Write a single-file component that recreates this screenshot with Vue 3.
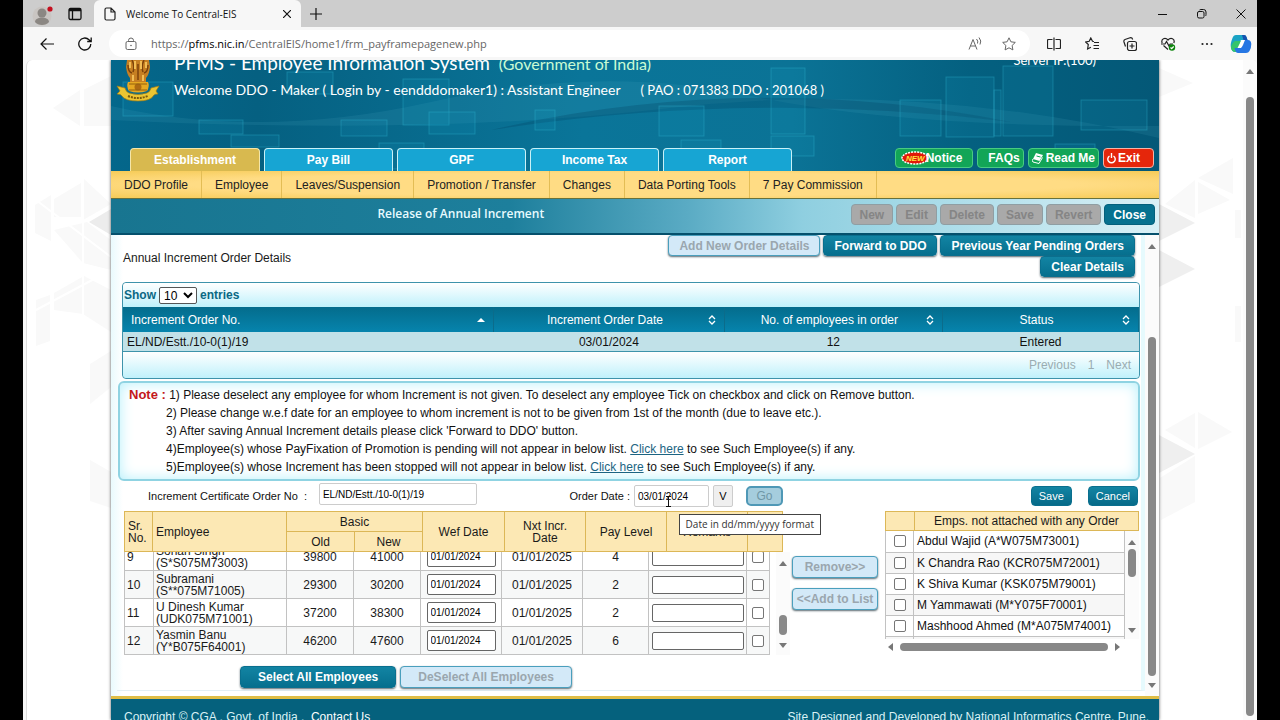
<script setup>
import { ref } from 'vue'

const tabs = ['Establishment', 'Pay Bill', 'GPF', 'Income Tax', 'Report']
const menu = ['DDO Profile', 'Employee', 'Leaves/Suspension', 'Promotion / Transfer', 'Changes', 'Data Porting Tools', '7 Pay Commission']
const actions = ['New', 'Edit', 'Delete', 'Save', 'Revert']
const employees = [
  { no: 9, name: 'Sohan Singh', code: '(S*S075M73003)', old: 39800, next: 41000, level: 4 },
  { no: 10, name: 'Subramani', code: '(S**075M71005)', old: 29300, next: 30200, level: 2 },
  { no: 11, name: 'U Dinesh Kumar', code: '(UDK075M71001)', old: 37200, next: 38300, level: 2 },
  { no: 12, name: 'Yasmin Banu', code: '(Y*B075F64001)', old: 46200, next: 47600, level: 6 }
]
const unattached = [
  'Abdul Wajid (A*W075M73001)',
  'K Chandra Rao (KCR075M72001)',
  'K Shiva Kumar (KSK075M79001)',
  'M Yammawati (M*Y075F70001)',
  'Mashhood Ahmed (M*A075M74001)',
  ''
]
const certificate = ref('EL/ND/Estt./10-0(1)/19')
const orderDate = ref('03/01/2024')
const squares = [
  [12, 22, 50, 34], [88, 60, 44, 14], [120, 75, 48, 12], [176, 12, 46, 22], [230, 60, 46, 16],
  [268, 83, 45, 26], [292, 19, 46, 46], [318, 52, 46, 22], [175, 90, 40, 12], [424, 50, 20, 20],
  [548, 46, 45, 30], [570, 80, 40, 12], [660, 8, 34, 66], [660, 76, 43, 20], [789, 40, 41, 36],
  [835, 17, 48, 60], [883, 30, 7, 46], [892, 6, 50, 70], [970, 40, 66, 30], [944, 84, 40, 12]
]
</script>

<template>
  <div class="screen">
    <div class="browser">
      <header class="titlebar">
        <button class="plain avatar" aria-label="Profile">
          <svg width="26" height="24" viewBox="0 0 26 24"><circle cx="13" cy="14" r="9.500" fill="#c9c5c2"/><circle cx="13" cy="11" r="4.500" fill="#8b8783"/><path d="M6 20c0-6 14-6 14 0-3 4-11 4-14 0z" fill="#8b8783"/><circle cx="21" cy="7" r="2.600" fill="#c50f1f"/></svg>
        </button>
        <button class="plain workspaces" aria-label="Tab actions">
          <svg width="14" height="14" viewBox="0 0 14 14" fill="none" stroke="#111" stroke-width="1.300"><rect x="1" y="1.500" width="12" height="11" rx="1.500"/><path d="M1 3h12" stroke-width="2.500"/><path d="M4.500 3v9"/></svg>
        </button>
        <div class="tab">
          <svg width="12" height="14" viewBox="0 0 12 14" fill="none" stroke="#222" stroke-width="1.200"><path d="M2.500 1H7l4 4v6.500a1.500 1.500 0 0 1-1.500 1.500h-7A1.500 1.500 0 0 1 1 11.500v-9A1.500 1.500 0 0 1 2.500 1zM7 1v4h4"/></svg>
          <span class="tab-title">Welcome To Central-EIS</span>
          <button class="plain" aria-label="Close tab"><svg width="8" height="8" viewBox="0 0 8 8" stroke="#111" stroke-width="1.200"><path d="M0 0l8 8M8 0l-8 8"/></svg></button>
        </div>
        <button class="plain newtab" aria-label="New tab"><svg width="12" height="12" viewBox="0 0 12 12" stroke="#111" stroke-width="1.200"><path d="M6 0v12M0 6h12"/></svg></button>
        <div class="window-controls">
          <button class="plain" aria-label="Minimize"><svg width="10" height="10" viewBox="0 0 10 10" stroke="#111"><path d="M0 5.500h9"/></svg></button>
          <button class="plain" aria-label="Restore"><svg width="10" height="10" viewBox="0 0 10 10" fill="none" stroke="#111"><rect x=".5" y="2.500" width="6.500" height="6.500" rx="1.500"/><path d="M2.500 1Q3 .5 4 .5h2.500Q9 .5 9 3v2.500Q9 6.500 8.500 7"/></svg></button>
          <button class="plain" aria-label="Close"><svg width="10" height="10" viewBox="0 0 10 10" stroke="#111"><path d="M.5.5l9 9M9.500.5l-9 9"/></svg></button>
        </div>
      </header>

      <div class="toolbar">
        <button class="plain" aria-label="Back"><svg width="14" height="12" viewBox="0 0 14 12" fill="none" stroke="#111" stroke-width="1.200"><path d="M14 6H1M6.500.5L1 6l5.500 5.500"/></svg></button>
        <button class="plain" aria-label="Refresh"><svg width="14" height="14" viewBox="0 0 14 14" fill="none" stroke="#111" stroke-width="1.300"><path d="M12.800 7A6 6 0 1 1 11 2.700L13 4.500M13.200.5v4H9.200"/></svg></button>
        <div class="address">
          <svg width="12" height="14" viewBox="0 0 12 14" fill="none" stroke="#666"><rect x="1" y="4.500" width="10" height="8" rx="1.500"/><path d="M3.500 4.500V3.500a2.500 2.500 0 0 1 5 0v1"/><circle cx="6" cy="8.500" r=".8" fill="#666" stroke="none"/></svg>
          <span class="url">https://<b>pfms.nic.in</b>/CentralEIS/home1/frm_payframepagenew.php</span>
          <svg class="read" width="14" height="14" viewBox="0 0 14 14" fill="none" stroke="#666"><path d="M1 12.500L5 2.500l4 10M2.500 9h5M8.500 2q2 2 1 4.500M11 .5q3 3.500 1 7"/></svg>
          <svg width="14" height="14" viewBox="0 0 14 14" fill="none" stroke="#666" stroke-linejoin="round"><path d="M7 .8l1.900 4 4.400.6-3.200 3.100.8 4.400L7 10.800l-3.900 2.100.8-4.400L.7 5.400l4.400-.6z"/></svg>
        </div>
        <div class="tools">
          <svg width="14" height="14" viewBox="0 0 14 14" fill="none" stroke="#222" stroke-width="1.200"><path d="M5.500 2.500h-4q-1 0-1 1v7q0 1 1 1h4M8.500 2.500h4q1 0 1 1v7q0 1-1 1h-4M7 .5v13"/></svg>
          <svg width="14" height="14" viewBox="0 0 14 14" fill="none" stroke="#222" stroke-width="1.200"><path d="M9 4.500L7.500 4.300 5.800 1 4.200 4.300.7 5l2.600 2.500-.7 4.500 3.300-1.800M9 5.500h5M8.500 8.500h5.500M8.500 11.500h5.500"/></svg>
          <svg width="14" height="14" viewBox="0 0 14 14" fill="none" stroke="#222" stroke-width="1.200"><rect x="4.500" y="4.500" width="9" height="9" rx="2"/><path d="M9 6.500v5M6.500 9h5M2.500 9.500L1 5q-.5-2 1-2.500L7 .8q2-.5 2.700 1.700"/></svg>
          <svg width="15" height="14" viewBox="0 0 15 14" fill="none" stroke="#222" stroke-width="1.200"><path d="M1.200 6Q0 3 2.500 1.700 5 .7 7 3 9 .7 11.500 1.700 14 3 12.800 6M0 7h4l1.500-2.500L8 9l1.200-2H12M2.500 8.500L7 12.500"/><circle cx="11" cy="10.500" r="3.200" fill="#0b840b" stroke="none"/><path d="M9.500 10.500l1.200 1.200 2-2.200" stroke="#fff"/></svg>
          <svg width="14" height="14" viewBox="0 0 14 14" fill="#222"><circle cx="2.500" cy="7" r="1.100"/><circle cx="7" cy="7" r="1.100"/><circle cx="11.500" cy="7" r="1.100"/></svg>
        </div>
        <svg class="copilot" width="22" height="20" viewBox="0 0 22 20"><path d="M6 1h8q2 0 2.500 2l1 3H12q-2 0-3 3l-2 7q-.5 2-2 2-3 0-4-4-1-4 1.500-10Q3.500 1 6 1z" fill="#1aa3c4"/><path d="M5 7h6l-3 9q-.5 2-2.500 2Q2 18 1 14q0-4 4-7z" fill="#35c46b"/><path d="M16 19H8q-2 0-2.500-2l-1-3H10q2 0 3-3l2-5h3q3 0 3.300 4 0 4-1.800 7-1 2-3.500 2z" fill="#2576e3"/><path d="M14 1q2 0 2.500 2l1 3h-4L12 1z" fill="#1552b0"/><path d="M11.500 6h3l-3.500 8H7.500z" fill="#fff"/></svg>
      </div>

      <div class="viewport">
        <svg class="backdrop" width="84" height="600" viewBox="27 60 84 600">
          <g fill="#f9f9f9"><path d="M53 108l27-18v36zM83 90l28-14v50H83zM35 205l16-10v46l-16-8zM54 199l27-16v34H54zM83 178l28 26-28 16zM54 230l33-8 24 18v30l-28-7zM54 293l30-17 27 14v42l-28-18-29-4zM36 300l14-5v46l-14 5zM90 364l21-13v36l-21 17zM90 460l21 12v36l-21-7z"/></g>
          <path d="M89 222l22-13v26z" fill="#ececec"/>
          <g stroke="#fff" stroke-width="2"><path d="M83 76v280M53 183v160M36 200l75 57M36 310l75-40"/></g>
        </svg>
        <div class="page">
          <header class="banner">
            <svg class="art" viewBox="0 0 1048 111" preserveAspectRatio="none" aria-hidden="true">
              <path d="M0 46Q150 80 320 42T640 36t408 30v12Q800 20 560 48T0 60z" fill="#56b4c8" opacity=".13"/>
              <path d="M380 70Q640 10 900 62 640 30 380 70z" fill="#003d5c" opacity=".25"/>
              <rect v-for="(s, i) in squares" :key="i" :x="s[0]" :y="s[1]" :width="s[2]" :height="s[3]" fill="#19a6c8" fill-opacity=".13" stroke="#38c3dc" stroke-opacity=".3"/>
            </svg>
            <svg class="emblem" width="44" height="42" viewBox="0 0 44 42">
              <path d="M11 0h22l1 7q-1 8-4 11v4H14v-4q-3-3-4-11z" fill="#c67f22"/>
              <path d="M16 0q3 6 1 12M28 0q-3 6-1 12M22 4v16M12 5q0 7 4 8M32 5q0 7-4 8" fill="none" stroke="#7c420b" stroke-width="1.500"/>
              <path d="M19 1v8M25 1v8M14 2v6M30 2v6M17 15v6M27 15v6" fill="none" stroke="#f2bd55" stroke-width="2"/>
              <path d="M12 22h20q2 4-1 9-9 3-18 0-3-5-1-9z" fill="#e6a821"/>
              <circle cx="22" cy="27" r="3.500" fill="#ad6a12"/><path d="M13 24h18M13 30h18" stroke="#94600f"/>
              <path d="M1 26l8 2q1 4 4 5 9 3 18 0 3-1 4-5l8-2-3 5 2 3q-3 0-4 1-3 6-16 6T6 36q-1-2-5-2l3-3z" fill="#ecc532" stroke="#a37d14" stroke-width=".7"/>
              <path d="M12 36q10 4 20 0" fill="none" stroke="#7a5b0d" stroke-width="2" stroke-dasharray="2 1"/>
            </svg>
            <div class="heading">
              <div class="product">PFMS - Employee Information System <span class="govt">(Government of India)</span></div>
              <div class="welcome"><span>Welcome DDO - Maker ( Login by - eendddomaker1) : Assistant Engineer</span><span class="office">( PAO : 071383 DDO : 201068 )</span></div>
            </div>
            <div class="server">Server IP.(100)</div>
            <nav class="tabs">
              <button v-for="(t, i) in tabs" :key="t" :class="{ active: i === 0 }">{{ t }}</button>
            </nav>
            <div class="links">
              <button class="notice"><svg width="28" height="14" viewBox="0 0 28 14"><ellipse cx="14" cy="7" rx="13" ry="6" fill="#e01808" stroke="#fff" stroke-width="1.500" stroke-dasharray="2 1"/><text x="5" y="10" font-family="Liberation Sans, sans-serif" font-size="8" font-weight="700" font-style="italic" fill="#ffe640">NEW</text></svg><span>Notice</span></button>
              <button class="faq">FAQs</button>
              <button class="readme"><svg width="11" height="11" viewBox="0 0 11 11"><path d="M4 0l7 2-3.500 6L1 6z" fill="#fff"/><path d="M1 6q-1.500 2 0 3l6 1.500 3.500-6" fill="none" stroke="#fff"/><path d="M4.500 3l4 1" stroke="#12a557"/></svg>Read Me</button>
              <button class="exit"><svg width="9" height="11" viewBox="0 0 9 11" fill="none" stroke="#fff" stroke-width="1.400"><path d="M2.500 3a3.700 3.700 0 1 0 4 0M4.500 0v5"/></svg>Exit</button>
            </div>
          </header>

          <nav class="menu"><a v-for="m in menu" :key="m" href="#">{{ m }}</a></nav>

          <div class="titlestrip">
            <h1>Release of Annual Increment</h1>
            <div class="actions">
              <button v-for="a in actions" :key="a" disabled>{{ a }}</button>
              <button class="close">Close</button>
            </div>
          </div>

          <div class="body">
            <main class="panel">
              <div class="orders-head">
                <h2>Annual Increment Order Details</h2>
                <div class="orders-actions">
                  <button class="btn" disabled>Add New Order Details</button>
                  <button class="btn">Forward to DDO</button>
                  <button class="btn">Previous Year Pending Orders</button>
                  <button class="btn">Clear Details</button>
                </div>
              </div>

              <section class="orders">
                <div class="length"><label for="len">Show</label><select id="len"><option>10</option></select><label for="len">entries</label></div>
                <table>
                  <colgroup><col class="c1"><col class="c2"><col class="c3"><col class="c4"></colgroup>
                  <thead><tr>
                    <th><div class="th"><span>Increment Order No.</span><svg width="8" height="10" viewBox="0 0 8 10"><path d="M0 7l4-4 4 4z" fill="#fff"/></svg></div></th>
                    <th v-for="h in ['Increment Order Date', 'No. of employees in order', 'Status']" :key="h"><div class="th"><span>{{ h }}</span><svg width="8" height="10" viewBox="0 0 8 10" fill="none" stroke="#fff" stroke-width="1.300"><path d="M1 4l3-3 3 3M1 6l3 3 3-3"/></svg></div></th>
                  </tr></thead>
                  <tbody><tr><td>EL/ND/Estt./10-0(1)/19</td><td>03/01/2024</td><td>12</td><td>Entered</td></tr></tbody>
                </table>
                <div class="pager"><button disabled>Previous</button><button disabled>1</button><button disabled>Next</button></div>
              </section>

              <section class="note">
                <p class="first"><strong>Note :</strong> 1) Please deselect any employee for whom Increment is not given. To deselect any employee Tick on checkbox and click on Remove button.</p>
                <p>2) Please change w.e.f date for an employee to whom increment is not to be given from 1st of the month (due to leave etc.).</p>
                <p>3) After saving Annual Increment details please click 'Forward to DDO' button.</p>
                <p>4)Employee(s) whose PayFixation of Promotion is pending will not appear in below list. <a href="#">Click here</a> to see Such Employee(s) if any.</p>
                <p>5)Employee(s) whose Increment has been stopped will not appear in below list. <a href="#">Click here</a> to see Such Employee(s) if any.</p>
              </section>

              <div class="form">
                <div class="fields">
                  <div class="field"><label for="cert">Increment Certificate Order No &nbsp;:</label><input id="cert" v-model="certificate" type="text"></div>
                  <div class="field date">
                    <label for="odate">Order Date :</label><input id="odate" v-model="orderDate" type="text"><button class="pick" aria-label="Pick date">V</button><button class="go" disabled>Go</button>
                    <svg class="cursor" width="7" height="11" viewBox="0 0 7 11" fill="none" stroke="#111"><path d="M1 .5h5M1 10.500h5M3.500.5v10"/></svg>
                    <div class="tooltip" role="tooltip">Date in dd/mm/yyyy format</div>
                  </div>
                </div>
                <div class="commit"><button class="small">Save</button><button class="small">Cancel</button></div>
              </div>

              <div class="lists">
                <div class="employees">
                  <table class="ehead">
                    <colgroup><col class="h1"><col class="h2"><col class="h3"><col class="h4"><col class="h5"><col class="h6"><col class="h7"><col class="h8"><col class="h9"></colgroup>
                    <tbody>
                      <tr><th rowspan="2" class="l">Sr.<br>No.</th><th rowspan="2" class="l">Employee</th><th colspan="2">Basic</th><th rowspan="2">Wef Date</th><th rowspan="2">Nxt Incr.<br>Date</th><th rowspan="2">Pay Level</th><th rowspan="2">Remarks</th><th rowspan="2"></th></tr>
                      <tr><th>Old</th><th>New</th></tr>
                    </tbody>
                  </table>
                  <div class="scroll">
                    <div class="clip">
                      <table class="ebody">
                        <colgroup><col class="b1"><col class="b2"><col class="b3"><col class="b4"><col class="b5"><col class="b6"><col class="b7"><col class="b8"><col class="b9"></colgroup>
                        <tbody>
                          <tr v-for="e in employees" :key="e.no">
                            <td class="l">{{ e.no }}</td><td class="l">{{ e.name }}<br>{{ e.code }}</td><td>{{ e.old }}</td><td>{{ e.next }}</td>
                            <td><input class="wef" type="text" value="01/01/2024" :aria-label="'Wef date ' + e.no"></td><td>01/01/2025</td><td>{{ e.level }}</td>
                            <td><input class="remark" type="text" :aria-label="'Remarks ' + e.no"></td><td><input type="checkbox" :aria-label="'Select ' + e.name"></td>
                          </tr>
                        </tbody>
                      </table>
                    </div>
                    <div class="bar inner"><i class="up"></i><i class="thumb"></i><i class="down"></i></div>
                  </div>
                </div>
                <div class="transfer"><button class="btn" disabled>Remove&gt;&gt;</button><button class="btn" disabled>&lt;&lt;Add to List</button></div>
                <div class="unattached">
                  <div class="uhead"><span></span><span>Emps. not attached with any Order</span></div>
                  <div class="uscroll">
                    <div class="uclip">
                      <table><tbody><tr v-for="(u, i) in unattached" :key="i"><td><input :id="'u' + i" type="checkbox"></td><td><label :for="'u' + i">{{ u }}</label></td></tr></tbody></table>
                    </div>
                    <div class="bar list"><i class="up"></i><i class="thumb"></i><i class="down"></i></div>
                  </div>
                  <div class="hbar"><i class="prev"></i><i class="track"></i><i class="next"></i></div>
                </div>
              </div>

              <div class="bulk"><button class="btn">Select All Employees</button><button class="btn" disabled>DeSelect All Employees</button></div>
            </main>
            <div class="bar frame"><i class="up"></i><i class="thumb"></i><i class="down"></i></div>
          </div>

          <footer><span>Copyright © CGA , Govt. of India , &nbsp;<a href="#">Contact Us</a></span><span>Site Designed and Developed by National Informatics Centre, Pune.</span></footer>
        </div>
        <div class="gutter">
          <svg class="backdrop" width="84" height="600" viewBox="1159 60 84 600">
            <g fill="#f9f9f9"><path d="M1159 68l34 15-34 14zM1165 204l30-24v38zM1198 178l35-20v36zM1198 182l32 18-32 14zM1235 210h6v28h-6zM1235 306h6v36h-6zM1165 430l30-17v35zM1198 412l34 20-34 17zM1160 478l35-22v46l-34 18z"/></g>
            <path d="M1159 204l36 19-36 18zM1159 250l36 19-36 18zM1159 435l36 19-36 19z" fill="#efefef"/>
          </svg>
        </div>
        <div class="bar window"><i class="up"></i><i class="thumb"></i></div>
      </div>
    </div>
  </div>
</template>

<style>
html, body { margin: 0; background: #000; overflow: hidden; }
</style>

<style scoped>
* { box-sizing: border-box; }
button, input, select { font: inherit; margin: 0; }
button { cursor: pointer; white-space: nowrap; }
svg { display: block; flex: none; }
table { border-collapse: collapse; border-spacing: 0; width: 100%; table-layout: fixed; }
.screen { height: 100vh; padding: 0 23px; background: #000; font: 12px/14px "Liberation Sans", Arial, sans-serif; color: #1a1a1a; }
.browser { height: 100%; display: flex; flex-direction: column; background: #f7f7f7; overflow: hidden; }
.plain { border: 0; background: none; padding: 0; display: flex; align-items: center; }

.titlebar { flex: none; height: 27px; background: #cdcdcd; display: flex; align-items: center; padding-right: 11px; }
.avatar { margin-left: 6px; }
.workspaces { margin: 0 12px 0 13px; }
.tab { align-self: stretch; width: 207px; background: #f7f7f7; border-radius: 6px 6px 0 0; display: flex; align-items: center; padding: 0 10px; font: 10px/14px "Open Sans", "Noto Sans", sans-serif; color: #111; }
.tab-title { flex: 1; margin-left: 10px; }
.newtab { margin-left: 9px; }
.window-controls { margin-left: auto; display: flex; gap: 29px; }

.toolbar { flex: none; height: 33px; display: flex; align-items: center; padding: 0 5px 0 17px; gap: 24px; }
.address { flex: 1; height: 27px; margin: 0 -7px; background: #fff; border-radius: 14px; display: flex; align-items: center; padding: 0 14px 0 16px; font: 11px/16px "Open Sans", "Noto Sans", sans-serif; color: #666; }
.address .url { flex: 1; margin-left: 14px; }
.url b { font-weight: 400; color: #000; }
.address .read { margin-right: 20px; }
.tools { display: flex; gap: 24px; }
.copilot { margin-left: -8px; }

.viewport { flex: 1; min-height: 0; margin-left: 3px; border-left: 1px solid #ddd; border-radius: 6px 6px 0 0; background: #fff; display: flex; overflow: hidden; position: relative; }
.backdrop { flex: none; }
.gutter { flex: none; width: 84px; }
.page { flex: 1; min-width: 0; height: 100%; display: flex; flex-direction: column; position: relative; box-shadow: 0 0 3px #555; background: #fff; }

.banner { flex: none; height: 111px; position: relative; background: linear-gradient(90deg, #04678b, #056081 14%, #0a7599 45%, #0b7396 65%, #046080 82%, #045877); overflow: hidden; }
.art { position: absolute; inset: 0; width: 100%; height: 100%; }
.emblem { position: absolute; left: 5px; top: 0; }
.heading { position: absolute; left: 63px; top: -9px; color: #fff; font-family: Lato, Carlito, sans-serif; white-space: nowrap; }
.product { font-size: 19px; line-height: 24px; }
.govt { font-size: 16px; color: #c9fbd4; margin-left: 4px; }
.welcome { display: flex; gap: 20px; font-size: 14px; line-height: 20px; margin-top: 4px; }
.office { font-size: 13px; }
.server { position: absolute; right: 63px; top: -9px; font: 13px/18px Lato, sans-serif; color: #fff; }
.tabs { position: absolute; left: 19px; bottom: 0; display: flex; gap: 4px; }
.tabs button { width: 129px; height: 23px; border: 1px solid #c9f1f7; border-bottom: 0; border-radius: 4px 4px 0 0; background: #17a5d3; color: #fff; font-weight: 700; padding: 0; line-height: 20px; }
.tabs button.active { width: 130px; background: #d8b94f; border-color: #f5e6a8; }
.links { position: absolute; right: 5px; bottom: 3px; display: flex; gap: 4px; }
.links button { height: 20px; display: flex; align-items: center; border: 1px solid #49cb82; border-radius: 4px; background: #12a557; color: #fff; font-weight: 700; padding: 0 3px; }
.links .notice { width: 78px; padding-left: 5px; }
.notice svg { margin-right: -3px; }
.notice span { position: relative; }
.links .faq { width: 47px; justify-content: flex-end; }
.links .readme { gap: 3px; }
.links .exit { width: 51px; background: #e5260b; border-color: #f7b3a6; gap: 2px; }

.menu { flex: none; height: 28px; display: flex; background: radial-gradient(ellipse at center, #ffdc84 60%, #f6cb57 100%); border-bottom: 1px solid #67713d; }
.menu a { padding: 0 13px; border-right: 1px solid #e3bd55; color: #222; text-decoration: none; line-height: 28px; }

.titlestrip { flex: none; height: 36px; border-bottom: 2px solid #05506c; background: linear-gradient(90deg, #187590, #1d7f9c 38%, #5aabc4 55%, #8fcfe0 66%, #a8dbe8 78%, #d9f0f6); display: flex; padding: 5px 4px 0; }
h1 { flex: 1; margin: 0; padding: 0 44px 0 0; text-align: center; font: 600 12px/20px "Open Sans", "Noto Sans", sans-serif; color: #e8fbff; }
.actions { display: flex; gap: 3px; align-items: flex-start; }
.actions button { height: 21px; padding: 0 8px; border: 1px solid #8f9ea3; border-radius: 4px; background: #a9a9a9; color: #858585; font-weight: 700; line-height: 18px; }
.actions .close { background: #06718f; border-color: #04607c; color: #fff; }

.body { flex: 1; min-height: 0; display: flex; background: linear-gradient(90deg, #e9fafd, #fff 12px); }
.panel { flex: 1; min-width: 0; margin-left: 6px; margin-bottom: 5px; border-bottom: 1px solid #e3eef2; border-right: 4px solid #e6fafd; }
.btn { height: 22px; padding: 0 10px; border: 1px solid #0a6f8e; border-radius: 4px; background: linear-gradient(#1284a3, #066f8e); color: #fff; font-weight: 700; line-height: 18px; box-shadow: 0 1px 2px #5b6b72; }
.btn:disabled { background: #d3e9f8; border-color: #4a9fbd; color: #9aa6ae; }
.orders-head { height: 47px; display: flex; justify-content: space-between; overflow: hidden; padding: 0 6px; }
h2 { margin: 16px 0 0; font: 12px/14px "Liberation Sans", Arial, sans-serif; white-space: nowrap; }
.orders-actions { flex: none; width: 480px; display: flex; flex-wrap: wrap; justify-content: flex-end; align-content: flex-start; gap: 0 3px; }
.orders-actions .btn { height: 21px; }

.orders { margin: 0 1px 0 5px; border: 1px solid #3e93ab; border-radius: 4px; background: linear-gradient(#fff, #c0f1fb); }
.length { height: 24px; display: flex; align-items: center; gap: 3px; padding-left: 1px; color: #0b6884; font-weight: 700; background: linear-gradient(#fff, #bff1fb); border-radius: 4px 4px 0 0; }
.length select { width: 38px; height: 17px; font-weight: 400; font-size: 12px; padding: 0; border: 1px solid #555; border-radius: 2px; background: #fff; color: #000; }
.c1 { width: 36.5%; } .c2 { width: 22.7%; } .c3 { width: 21.5%; } .c4 { width: 19.3%; }
.orders th { height: 25px; padding: 0 8px; font-weight: 400; color: #fff; border-right: 1px solid #0b6c8b; }
.orders thead { background: linear-gradient(#046c8c, #0684ad); }
.th { display: flex; align-items: center; }
.th span { flex: 1; }
.orders th:first-child { text-align: left; }
.orders td { height: 19px; padding: 0 4px; text-align: center; background: #c1e1e8; color: #111; line-height: 16px; }
.orders td:first-child { text-align: left; }
.pager { height: 27px; border-top: 1px solid #3e93ab; background: linear-gradient(#fff, #c0f1fb); border-radius: 0 0 4px 4px; display: flex; justify-content: flex-end; align-items: center; padding-right: 2px; }
.pager button { border: 0; background: none; padding: 0 6px; color: #9aacb1; }

.note { margin: 2px 1px 0 1px; height: 100px; border: 2px solid #8fd3e2; border-radius: 6px; background: #fff; box-shadow: inset 0 0 14px #b5f0fb; padding: 3px 9px; }
.note p { margin: 0; padding-left: 37px; line-height: 18px; white-space: nowrap; color: #111; }
.note p.first { padding-left: 0; }
.note strong { color: #c3171b; font-size: 13px; }
.note a { color: #1c6482; }

.form { display: flex; justify-content: space-between; height: 30px; padding: 0 3px 0 31px; color: #111; font-size: 11px; }
.fields { flex: 0 0 635px; display: flex; justify-content: space-between; }
.field { display: flex; align-items: center; position: relative; gap: 4px; }
.field input { height: 22px; border: 1px solid #ccc; border-radius: 2px; font-size: 10px; padding: 0 3px; background: #fff; color: #000; }
#cert { width: 158px; margin: 0 0 4px 8px; }
#odate { width: 75px; }
.pick { width: 20px; height: 22px; border: 1px solid #ccc; border-radius: 2px; background: #efefef; color: #000; padding: 0; }
.go { width: 37px; height: 20px; margin-left: 9px; border: 2px solid #4f98b6; border-radius: 5px; background: #a5cddd; color: #6f97a6; padding: 0; line-height: 14px; font-size: 12px; }
.cursor { position: absolute; right: 111px; top: 15px; }
.tooltip { position: absolute; right: -38px; top: 33px; z-index: 2; border: 1px solid #444; background: #fff; font: 10px/19px "Open Sans", "Noto Sans", sans-serif; padding: 0 6px; color: #333; white-space: nowrap; }
.commit { display: flex; gap: 16px; align-items: center; }
.small { height: 20px; padding: 0 7px; border: 1px solid #0a6f8e; border-radius: 4px; background: linear-gradient(#1284a3, #066a88); color: #fff; line-height: 16px; }

.lists { display: grid; grid-template-columns: 666fr 95px 254fr; padding: 0 2px 0 7px; }
.ehead { width: calc(100% - 7px); height: 40px; position: relative; z-index: 1; }
.ehead th { border: 1px solid #dcb757; background: #fce8b4; font-weight: 400; line-height: 12px; padding: 0; height: 20px; }
.ehead th.l { text-align: left; padding-left: 3px; }
.h1 { width: 28px; } .h3, .h4 { width: 68px; } .h5 { width: 82px; } .h6, .h7 { width: 81px; } .h8 { width: 81px; } .h9 { width: 35px; }
.scroll { display: flex; gap: 6px; }
.clip { flex: 1; height: 103px; overflow: hidden; display: flex; flex-direction: column; justify-content: flex-end; }
.ebody { flex: none; }
.ebody td { height: 28px; border: 1px solid #c2c2c2; text-align: center; line-height: 12px; padding: 0; }
.ebody td.l { text-align: left; padding-left: 2px; }
.ebody tr:nth-child(even) td { background: #f7f8f8; }
.b1 { width: 29px; } .b3, .b4 { width: 67px; } .b5 { width: 81px; } .b6 { width: 81px; } .b7 { width: 66px; } .b8 { width: 98px; } .b9 { width: 23px; }
.wef, .remark { border: 1px solid #666; border-radius: 2px; background: #fff; color: #000; font-size: 10px; display: block; margin: 0 auto; }
.wef { width: 69px; height: 21px; padding: 0 3px; }
.remark { width: 92px; height: 18px; padding: 0 3px; }
input[type="checkbox"] { appearance: none; display: block; width: 12px; height: 12px; margin: 0 auto; border: 1px solid #767676; border-radius: 2px; background: #fff; }

.transfer { padding: 45px 7px 0 2px; display: flex; flex-direction: column; gap: 10px; }
.transfer .btn { padding: 0; }
.uhead { display: grid; grid-template-columns: 28px 1fr; height: 20px; border: 1px solid #dcb757; background: #fce8b4; text-align: center; line-height: 18px; }
.uhead span + span { border-left: 1px solid #dcb757; }
.uscroll { display: flex; height: 108px; }
.uclip { flex: 1; overflow: hidden; }
.uclip td { height: 21px; padding: 0; border: 1px solid #c2c2c2; border-top: 0; white-space: nowrap; color: #111; }
.uclip td:first-child { width: 28px; }
.uclip td + td { padding-left: 3px; }
.uclip tr:nth-child(even) td { background: #f7f7f7; }

.bar { flex: none; width: 14px; background: #fbfbfb; display: flex; flex-direction: column; align-items: center; }
.bar i { display: block; }
.up { border: 4px solid transparent; border-top: 0; border-bottom: 5px solid #777; }
.down { border: 4px solid transparent; border-bottom: 0; border-top: 5px solid #777; }
.thumb { width: 8px; border-radius: 4px; background: #888; }
.inner { padding: 9px 0 7px; }
.inner .thumb { height: 20px; margin: auto 0 8px; }
.list { padding: 9px 0 6px; }
.list .thumb { height: 28px; margin: 4px 0 auto; }
.hbar { height: 15px; display: flex; align-items: center; padding: 0 19px 0 3px; gap: 7px; }
.prev { border: 4px solid transparent; border-left: 0; border-right: 5px solid #777; }
.next { border: 4px solid transparent; border-right: 0; border-left: 5px solid #777; }
.track { flex: 1; height: 8px; border-radius: 4px; background: #888; }
.frame { padding: 9px 0 8px; }
.frame .thumb { flex: 1; margin: 88px 0 7px; }
.window { padding: 9px 0 4px; }
.window .thumb { flex: 1; margin-top: 23px; }

.bulk { display: flex; gap: 4px; padding: 11px 0 0 123px; }
.bulk .btn { padding: 0 17px; }
footer { flex: none; height: 24px; border-top: 3px solid #dfbd45; background: #05617d; color: #d9f1f5; display: flex; justify-content: space-between; padding: 11px 10px 0 13px; overflow: hidden; white-space: nowrap; }
footer a { color: #fff; text-decoration: none; }
</style>
